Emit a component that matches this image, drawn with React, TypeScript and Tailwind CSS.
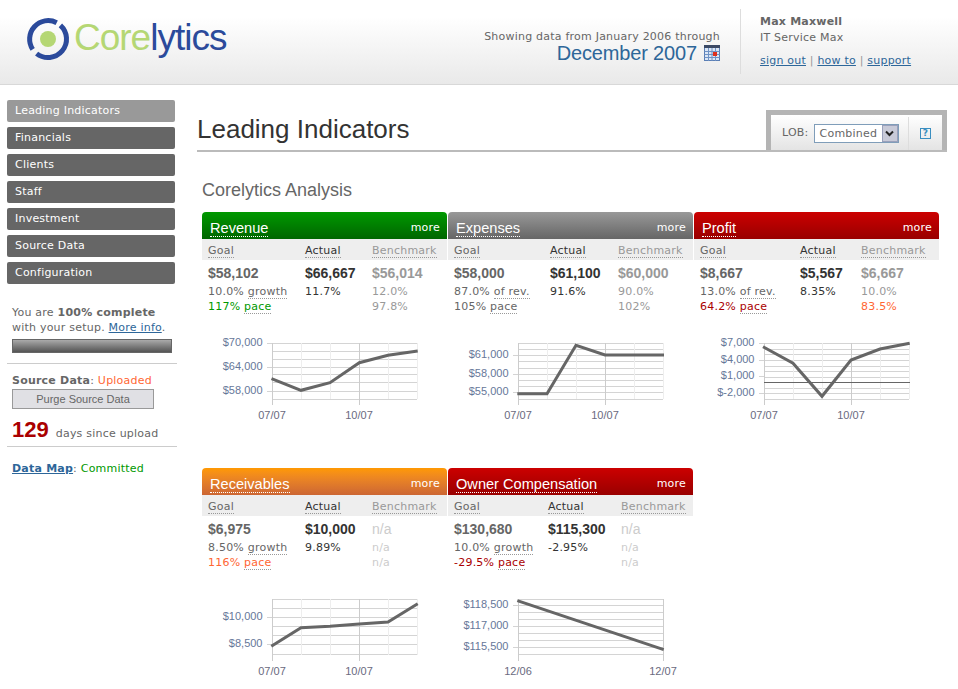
const verdana = 'font-["DejaVu_Sans",Verdana,sans-serif] tracking-[0.22px]';
const arial = 'font-["Liberation_Sans",Arial,sans-serif] tracking-normal';
const arialFace = 'font-["Liberation_Sans",Arial,sans-serif]';

const nav = ['Leading Indicators', 'Financials', 'Clients', 'Staff', 'Investment', 'Source Data', 'Configuration'];

type ChartData = {
  hlines: number[];
  labels: { text: string; y: number }[];
  ticks: { x: number; label?: string }[];
  points: number[][];
  zero?: number;
};

const sixTicks = [
  { x: 70, label: '07/07' },
  { x: 99 },
  { x: 128 },
  { x: 157, label: '10/07' },
  { x: 186 },
  { x: 215 },
];

type Metric = {
  title: string;
  head: string;
  cols: string;
  goal: string;
  actual: string;
  bench: string;
  goalPct: string;
  goalWord: string;
  actualPct: string;
  benchPct: string;
  pace: string;
  paceColor: string;
  benchPace: string;
  benchPaceColor: string;
  chart: ChartData;
};

const row1: Metric[] = [
  {
    title: 'Revenue',
    head: 'bg-gradient-to-b from-[#009900] to-[#006600]',
    cols: 'grid-cols-[97px_67px_1fr]',
    goal: '$58,102',
    actual: '$66,667',
    bench: '$56,014',
    goalPct: '10.0%',
    goalWord: 'growth',
    actualPct: '11.7%',
    benchPct: '12.0%',
    pace: '117%',
    paceColor: 'text-[#009900]',
    benchPace: '97.8%',
    benchPaceColor: 'text-[#999999]',
    chart: {
      hlines: [8, 16, 24, 32, 39, 47, 56, 64],
      labels: [
        { text: '$70,000', y: 8 },
        { text: '$64,000', y: 32 },
        { text: '$58,000', y: 56 },
      ],
      ticks: sixTicks,
      points: [[69.5, 43.7], [99, 55.3], [128, 47.7], [157.3, 27.7], [186, 20.3], [215.7, 16]],
    },
  },
  {
    title: 'Expenses',
    head: 'bg-gradient-to-b from-[#999999] to-[#666666]',
    cols: 'grid-cols-[96px_68px_1fr]',
    goal: '$58,000',
    actual: '$61,100',
    bench: '$60,000',
    goalPct: '87.0%',
    goalWord: 'of rev.',
    actualPct: '91.6%',
    benchPct: '90.0%',
    pace: '105%',
    paceColor: 'text-[#666666]',
    benchPace: '102%',
    benchPaceColor: 'text-[#999999]',
    chart: {
      hlines: [8, 14, 20, 26, 33, 39, 45, 51, 57, 64],
      labels: [
        { text: '$61,000', y: 20 },
        { text: '$58,000', y: 39 },
        { text: '$55,000', y: 57 },
      ],
      ticks: sixTicks,
      points: [[69.3, 58.7], [99, 58.7], [128, 10.3], [157, 20], [186, 20], [216, 20]],
    },
  },
  {
    title: 'Profit',
    head: 'bg-gradient-to-b from-[#cc0000] to-[#990000]',
    cols: 'grid-cols-[100px_61px_1fr]',
    goal: '$8,667',
    actual: '$5,567',
    bench: '$6,667',
    goalPct: '13.0%',
    goalWord: 'of rev.',
    actualPct: '8.35%',
    benchPct: '10.0%',
    pace: '64.2%',
    paceColor: 'text-[#aa0000]',
    benchPace: '83.5%',
    benchPaceColor: 'text-[#ff6633]',
    chart: {
      hlines: [8, 14, 19, 25, 31, 36, 42, 53, 58, 64],
      labels: [
        { text: '$7,000', y: 8 },
        { text: '$4,000', y: 25 },
        { text: '$1,000', y: 41 },
        { text: '$-2,000', y: 58 },
      ],
      ticks: sixTicks,
      points: [[69, 11.7], [99, 28.3], [128, 61.3], [157, 25], [186, 14], [215.7, 8.3]],
      zero: 47,
    },
  },
];

const row2: Metric[] = [
  {
    title: 'Receivables',
    head: 'bg-gradient-to-b from-[#ff9900] to-[#cc6633]',
    cols: 'grid-cols-[97px_67px_1fr]',
    goal: '$6,975',
    actual: '$10,000',
    bench: 'n/a',
    goalPct: '8.50%',
    goalWord: 'growth',
    actualPct: '9.89%',
    benchPct: 'n/a',
    pace: '116%',
    paceColor: 'text-[#ff6633]',
    benchPace: 'n/a',
    benchPaceColor: 'text-[#cccccc]',
    chart: {
      hlines: [8, 17, 26, 35, 44, 53, 63],
      labels: [
        { text: '$10,000', y: 26 },
        { text: '$8,500', y: 53 },
      ],
      ticks: sixTicks,
      points: [[69.3, 55.3], [99, 36.7], [128, 35.3], [157.3, 33], [186, 31], [215.7, 12.7]],
    },
  },
  {
    title: 'Owner Compensation',
    head: 'bg-gradient-to-b from-[#cc0000] to-[#990000]',
    cols: 'grid-cols-[94px_73px_1fr]',
    goal: '$130,680',
    actual: '$115,300',
    bench: 'n/a',
    goalPct: '10.0%',
    goalWord: 'growth',
    actualPct: '-2.95%',
    benchPct: 'n/a',
    pace: '-29.5%',
    paceColor: 'text-[#aa0000]',
    benchPace: 'n/a',
    benchPaceColor: 'text-[#cccccc]',
    chart: {
      hlines: [8, 14, 21, 28, 35, 42, 49, 56, 63],
      labels: [
        { text: '$118,500', y: 14 },
        { text: '$117,000', y: 35 },
        { text: '$115,500', y: 56 },
      ],
      ticks: [
        { x: 70, label: '12/06' },
        { x: 215, label: '12/07' },
      ],
      points: [[69.3, 9.7], [215.7, 58.7]],
    },
  },
];

function Logo() {
  return (
    <div className="flex items-center">
      <svg width="46" height="46" viewBox="25 15 46 46" className="mt-[4px]">
        <path d="M60.4 24.3 A18.5 18.5 0 0 1 36.6 52.6" fill="none" stroke="#2b4a9b" strokeWidth="5" />
        <path d="M32.7 48.3 A18.5 18.5 0 0 1 56.7 21.7" fill="none" stroke="#2b4a9b" strokeWidth="5" />
        <circle cx="48" cy="38" r="8" fill="#b5d774" />
      </svg>
      <span className={`${arialFace} text-[37px] leading-none tracking-[-1px] ml-[3px] text-[#b5d774]`}>
        Core<span className="text-[#2b4a9b]">lytics</span>
      </span>
    </div>
  );
}

function CalendarIcon() {
  return (
    <svg width="16" height="16" viewBox="0 0 16 16">
      <rect x="0.5" y="0.5" width="15" height="15" fill="#dbe6f5" stroke="#5b7fb5" />
      <rect x="0" y="0" width="16" height="3" fill="#3b4a66" />
      <path d="M0.5 6.5H15.5M0.5 9.5H15.5M0.5 12.5H15.5M4.5 3V16M8 3V16M11.5 3V16" stroke="#6f93c6" strokeWidth="1" />
      <rect x="9" y="7" width="4" height="4" fill="#e0301e" />
    </svg>
  );
}

function Header() {
  return (
    <header className="h-[85px] border-b border-[#d8d8d8] bg-gradient-to-b from-white from-20% to-[#e9e9e9] flex">
      <div className="pl-[25px] pt-[12px] w-[300px]">
        <Logo />
      </div>
      <div className="flex-1 flex flex-col items-end pt-[30px] pr-[20px]">
        <div className="text-[11px] leading-[14px] text-[#666666]">Showing data from January 2006 through</div>
        <div className="flex items-center gap-[7px] mt-[-2px]">
          <span className={`${arialFace} text-[20px] leading-[22px] tracking-[-0.15px] text-[#2d6699]`}>December 2007</span>
          <CalendarIcon />
        </div>
      </div>
      <div className="w-[218px] mt-[9px] h-[65px] border-l border-[#dddddd] pl-[19px] pt-[5px] text-[11px] leading-[15px] text-[#666666]">
        <div className="font-bold mb-[1px]">Max Maxwell</div>
        <div>IT Service Max</div>
        <div className="mt-[8px]">
          <a className="text-[#2d6699] underline">sign out</a>
          <span className="text-[#999999]"> | </span>
          <a className="text-[#2d6699] underline">how to</a>
          <span className="text-[#999999]"> | </span>
          <a className="text-[#2d6699] underline">support</a>
        </div>
      </div>
    </header>
  );
}

function Sidebar() {
  return (
    <aside className="w-[170px] ml-[7px] shrink-0 pt-[15px] text-[11px] leading-[15px] text-[#666666]">
      <nav className="flex flex-col gap-[5px] w-[168px]">
        {nav.map((item, i) => (
          <a
            key={item}
            className={`h-[22px] rounded-[2px] pl-[8px] leading-[22px] text-white ${i === 0 ? 'bg-[#999999]' : 'bg-[#666666]'}`}
          >
            {item}
          </a>
        ))}
      </nav>
      <div className="pl-[5px] mt-[21px]">
        <p>
          You are <b>100% complete</b>
        </p>
        <p>
          with your setup. <a className="text-[#2d6699] underline">More info</a>.
        </p>
        <div className="mt-[4px] w-[160px] h-[14px] border border-[#666666] bg-gradient-to-b from-[#aaaaaa] to-[#555555]" />
      </div>
      <div className="mt-[10px] border-t border-[#cccccc] pl-[5px] pt-[9px]">
        <p>
          <b>Source Data</b>: <span className="text-[#ff6633]">Uploaded</span>
        </p>
        <div className={`${arial} mt-[1px] w-[142px] h-[20px] border border-[#999999] bg-[#e0e0e4] text-center text-[11px] leading-[18px]`}>
          Purge Source Data
        </div>
        <div className="mt-[8px] flex items-baseline gap-[7px] h-[26px]">
          <span className={`${arial} font-bold text-[22px] leading-[26px] text-[#aa0000]`}>129</span>
          <span>days since upload</span>
        </div>
      </div>
      <div className="mt-[3px] border-t border-[#cccccc] pl-[5px] pt-[14px]">
        <a className="font-bold text-[#2d6699] underline">Data Map</a>: <span className="text-[#009900]">Committed</span>
      </div>
    </aside>
  );
}

function Chart({ data }: { data: ChartData }) {
  const font = 'Liberation Sans, Arial, sans-serif';
  return (
    <svg width="245" height="86" className="block tracking-normal">
      {data.hlines.map((y) => (
        <line key={y} x1="70" x2="215" y1={y + 0.5} y2={y + 0.5} stroke="#d4d4d4" />
      ))}
      {data.labels.map((l) => (
        <g key={l.text}>
          <line x1="65" x2="70" y1={l.y + 0.5} y2={l.y + 0.5} stroke="#d4d4d4" />
          <text x="60.5" y={l.y + 2.5} textAnchor="end" fontFamily={font} fontSize="11" fill="#667799">
            {l.text}
          </text>
        </g>
      ))}
      {data.ticks.map((t) => (
        <g key={t.x}>
          {t.label ? (
            <>
              <line x1={t.x + 0.5} x2={t.x + 0.5} y1="8" y2="70" stroke="#cccccc" />
              <text x={t.x} y="84" textAnchor="middle" fontFamily={font} fontSize="11" fill="#6a6a80">
                {t.label}
              </text>
            </>
          ) : (
            <line x1={t.x + 0.5} x2={t.x + 0.5} y1="8" y2="64" stroke="#eeeeee" />
          )}
        </g>
      ))}
      <line x1="70.5" x2="70.5" y1="8" y2="70" stroke="#cccccc" />
      {data.zero !== undefined && (
        <line x1="70" x2="216" y1={data.zero + 0.5} y2={data.zero + 0.5} stroke="#666666" />
      )}
      <polyline
        points={data.points.map((p) => p.join(',')).join(' ')}
        fill="none"
        stroke="#666666"
        strokeWidth="3"
      />
    </svg>
  );
}

function Dotted({ children, className = '' }: { children: React.ReactNode; className?: string }) {
  return <span className={`border-b border-dotted border-[#999999] ${className}`}>{children}</span>;
}

function Card({ m }: { m: Metric }) {
  const na = m.bench === 'n/a';
  return (
    <section className="w-[245px] text-[11px]">
      <div className={`${m.head} h-[27px] rounded-t-[4px] flex items-start justify-between pl-[8px] pr-[7px] text-white`}>
        <span className={`${arial} text-[14.6px] leading-[16px] mt-[8px] border-b border-dotted border-white`}>{m.title}</span>
        <span className="leading-[14px] mt-[9px]">more</span>
      </div>
      <div className={`grid ${m.cols} h-[21px] bg-[#eeeeee] pl-[6px] leading-[14px] pt-[5px]`}>
        <div><Dotted className="text-[#666666]">Goal</Dotted></div>
        <div><Dotted className="text-[#333333]">Actual</Dotted></div>
        <div><Dotted className="text-[#999999]">Benchmark</Dotted></div>
      </div>
      <div className={`grid ${m.cols} h-[75px] pl-[6px] pt-[5px] content-start leading-[15px]`}>
        <div className={`${arial} font-bold text-[14px] leading-[16px] mb-[3px] text-[#666666]`}>{m.goal}</div>
        <div className={`${arial} font-bold text-[14px] leading-[16px] mb-[3px] text-[#333333]`}>{m.actual}</div>
        <div className={`${arial} text-[14px] leading-[16px] mb-[3px] ${na ? 'text-[#cccccc]' : 'font-bold text-[#999999]'}`}>{m.bench}</div>
        <div className="text-[#666666]">
          {m.goalPct} <Dotted>{m.goalWord}</Dotted>
        </div>
        <div className="text-[#333333]">{m.actualPct}</div>
        <div className={na ? 'text-[#cccccc]' : 'text-[#999999]'}>{m.benchPct}</div>
        <div className={m.paceColor}>
          {m.pace} <Dotted>pace</Dotted>
        </div>
        <div />
        <div className={m.benchPaceColor}>{m.benchPace}</div>
      </div>
      <Chart data={m.chart} />
    </section>
  );
}

export default function App() {
  return (
    <div className={`${verdana} w-[958px] h-[689px] overflow-hidden bg-white`}>
      <Header />
      <div className="flex">
        <Sidebar />
        <main className="w-[750px] ml-[20px] pt-[25px]">
          <div className="flex items-end justify-between border-b-2 border-[#bbbbbb] h-[42px]">
            <h1 className={`${arial} text-[26px] leading-[38px] mb-[2px] text-[#333333]`}>Leading Indicators</h1>
            <div className="w-[181px] h-[40px] border-[5px] border-b-0 border-[#b4b4b4] flex self-start">
              <div className="flex-1 rounded-t-[2px] bg-gradient-to-b from-white to-[#e4e4e4] flex text-[11px] text-[#666666] pt-[2px]">
                <div className="w-[138px] flex items-center pl-[11px] gap-[5px] border-r border-[#dddddd]">
                  <span>LOB:</span>
                  <div className="w-[85px] h-[19px] border border-[#7f9db9] bg-white flex items-center justify-between pl-[5px]">
                    <span className="leading-[16px]">Combined</span>
                    <span className="w-[16px] h-[17px] bg-[#c8cad8] border border-[#9aa0bb] flex items-center justify-center">
                      <svg width="9" height="7" viewBox="0 0 9 7">
                        <path d="M1 1.5 L4.5 5 L8 1.5" fill="none" stroke="#222222" strokeWidth="2" />
                      </svg>
                    </span>
                  </div>
                </div>
                <div className="flex-1 flex items-center justify-center">
                  <span className="w-[11px] h-[11px] border border-[#3a8ec0] text-[#3a8ec0] text-[9px] leading-[9px] text-center font-bold">?</span>
                </div>
              </div>
            </div>
          </div>
          <h2 className={`${arial} ml-[5px] mt-[27px] text-[18px] leading-[22px] text-[#666666]`}>Corelytics Analysis</h2>
          <div className="ml-[5px] mt-[11px] flex flex-col gap-[47px]">
            <div className="flex gap-[1px]">
              {row1.map((m) => (
                <Card key={m.title} m={m} />
              ))}
            </div>
            <div className="flex gap-[1px]">
              {row2.map((m) => (
                <Card key={m.title} m={m} />
              ))}
            </div>
          </div>
        </main>
      </div>
    </div>
  );
}
